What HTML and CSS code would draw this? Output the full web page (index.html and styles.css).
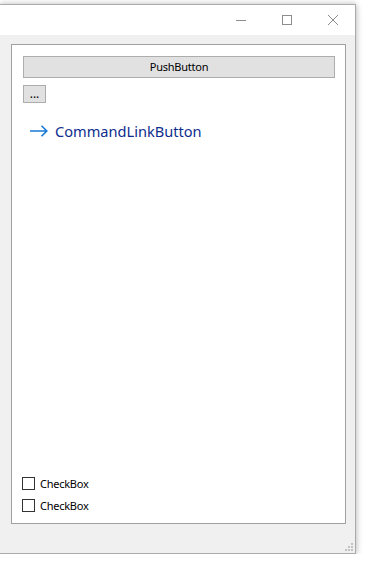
FILE: index.html
```html
<!DOCTYPE html>
<html lang="en">
<head>
    <meta charset="UTF-8">
    <meta name="viewport" content="width=device-width, initial-scale=1.0">
    <title>Form</title>
    <link rel="stylesheet" href="styles.css">
</head>
<body>
    <div class="window">
        <div class="titlebar">
            <div class="caption-btn">
                <svg width="10" height="10" viewBox="0 0 10 10"><path d="M0 5.5H10" stroke="#8c8c8c" stroke-width="1"/></svg>
            </div>
            <div class="caption-btn">
                <svg width="10" height="10" viewBox="0 0 10 10"><rect x="0.5" y="0.5" width="9" height="9" fill="none" stroke="#8c8c8c" stroke-width="1"/></svg>
            </div>
            <div class="caption-btn">
                <svg width="10" height="10" viewBox="0 0 10 10"><path d="M0 0L10 10M10 0L0 10" stroke="#8c8c8c" stroke-width="1"/></svg>
            </div>
        </div>

        <div class="client">
            <div class="frame">
                <button class="push">PushButton</button>
                <button class="tool">...</button>

                <div class="cmdlink">
                    <svg class="arrow" width="18" height="12" viewBox="0 0 18 12">
                        <path d="M0 6H16.5M11.5 0.8L16.8 6L11.5 11.2" fill="none" stroke="#1979d6" stroke-width="1.6"/>
                    </svg>
                    <span>CommandLinkButton</span>
                </div>

                <div class="spacer"></div>

                <label class="check"><span class="box"></span>CheckBox</label>
                <label class="check"><span class="box"></span>CheckBox</label>
            </div>

            <div class="grip">
                <i style="left:6px;top:0"></i>
                <i style="left:3px;top:3px"></i><i style="left:6px;top:3px"></i>
                <i style="left:0;top:6px"></i><i style="left:3px;top:6px"></i><i style="left:6px;top:6px"></i>
            </div>
        </div>
    </div>
</body>
</html>
```

FILE: styles.css
```css
body {
    margin: 0;
    padding-top: 4px;
    background: #ffffff;
    font-family: "Noto Sans", "Open Sans", sans-serif;
    font-size: 11px;
    letter-spacing: -0.25px;
    color: #000;
}

.window {
    width: 355px;
    height: 548px;
    border-top: 1px solid #ababab;
    border-right: 1px solid #ababab;
    border-bottom: 1px solid #ababab;
    box-shadow: 1px 1px 6px rgba(0, 0, 0, 0.22), 0 -3px 4px rgba(0, 0, 0, 0.06);
    display: flex;
    flex-direction: column;
}

.titlebar {
    height: 30px;
    background: #ffffff;
    display: flex;
    justify-content: flex-end;
}

.caption-btn {
    width: 46px;
    height: 30px;
    display: flex;
    align-items: center;
    justify-content: center;
}

.caption-btn:last-child {
    width: 45px;
}

.client {
    position: relative;
    flex: 1;
    background: #f0f0f0;
    padding: 9px 9px 29px 11px;
    display: flex;
}

.frame {
    flex: 1;
    background: #ffffff;
    border: 1px solid #a0a0a0;
    padding: 11px 10px 9px 11px;
    display: flex;
    flex-direction: column;
    align-items: flex-start;
}

button {
    font-family: inherit;
    font-size: 11px;
    letter-spacing: -0.25px;
    color: #000;
    background: #e1e1e1;
    border: 1px solid #adadad;
    margin: 0;
    padding: 0;
    box-sizing: border-box;
}

.push {
    width: 100%;
    height: 22px;
    line-height: 18px;
}

.tool {
    margin-top: 7px;
    width: 23px;
    height: 18px;
    line-height: 12px;
    font-size: 12px;
    letter-spacing: 0;
}

.cmdlink {
    margin-top: 13px;
    height: 29px;
    padding-left: 7px;
    display: flex;
    align-items: center;
    gap: 7px;
    font-size: 14.6px;
    letter-spacing: 0;
    color: #0e2d8e;
}

.arrow {
    display: block;
    margin-top: 1px;
}

.spacer {
    flex: 1;
}

.check {
    height: 17px;
    margin-left: -1px;
    display: flex;
    align-items: center;
    gap: 5px;
}

.check + .check {
    margin-top: 5px;
}

.box {
    width: 13px;
    height: 13px;
    box-sizing: border-box;
    border: 1px solid #333333;
    background: #ffffff;
}

.grip {
    position: absolute;
    right: 2px;
    bottom: 2px;
    width: 8px;
    height: 8px;
}

.grip i {
    position: absolute;
    width: 2px;
    height: 2px;
    background: #c2c2c2;
}
```
